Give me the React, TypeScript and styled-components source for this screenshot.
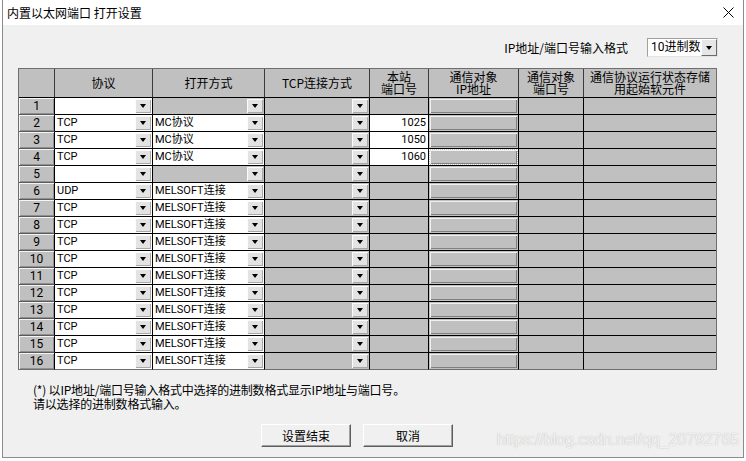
import React from 'react';
import styled, { createGlobalStyle } from 'styled-components';

const GlobalStyle = createGlobalStyle`
  html, body {
    margin: 0;
    padding: 0;
    background: #ffffff;
    overflow: hidden;
  }
  * {
    box-sizing: border-box;
  }
`;

const Window = styled.div`
  position: relative;
  margin-left: 2px;
  width: 742px;
  height: 458px;
  border: 1px solid #8c8c8c;
  border-top: none;
  display: flex;
  flex-direction: column;
  font-family: 'Noto Sans CJK SC', sans-serif;
  color: #000;
`;

const TitleBar = styled.div`
  height: 25px;
  flex: 0 0 auto;
  background: #ffffff;
  display: flex;
  align-items: center;
  justify-content: space-between;
  padding: 0 9px 0 4px;
  font-size: 12px;
`;

const Body = styled.div`
  flex: 1 1 auto;
  background: #f0f0f0;
  display: flex;
  flex-direction: column;
  padding: 13px 26px 0 15px;
`;

const FormatRow = styled.div`
  height: 19px;
  margin-bottom: 11px;
  display: flex;
  align-items: center;
  justify-content: flex-end;
  font-size: 12px;
`;

const FormatLabel = styled.span`
  margin-right: 19px;
`;

const Select = styled.div`
  width: 71px;
  height: 19px;
  margin-right: -1px;
  display: flex;
  align-items: stretch;
  background: #fff;
  border: 1px solid #a0a0a0;
  border-right-color: #e3e3e3;
  border-bottom-color: #e3e3e3;
  font-family: Roboto, 'Noto Sans CJK SC', sans-serif;
  font-size: 12px;
`;

const SelectText = styled.span`
  flex: 1;
  padding-left: 3px;
  line-height: 17px;
`;

const SelectButton = styled.div`
  width: 16px;
  background: #e6e6e6;
  border: 1px solid;
  border-color: #ffffff #6a6a6a #6a6a6a #ffffff;
  display: flex;
  align-items: center;
  justify-content: center;
`;

const Arrow = styled.span`
  width: 0;
  height: 0;
  border-left: 3.5px solid transparent;
  border-right: 3.5px solid transparent;
  border-top: 4px solid #000;
`;

const Grid = styled.div`
  width: 699px;
  display: grid;
  grid-template-columns: 36px 98px 112px 105px 59px 90px 65px 132px;
  grid-template-rows: 29px repeat(16, 17px);
  border: 1px solid #6e6e6e;
  border-bottom: none;
  background: #c0c0c0;
`;

const HeadCell = styled.div<{ $last?: boolean }>`
  background: #c0c0c0;
  border-right: ${({ $last }) => ($last ? 'none' : '1px solid #3c3c3c')};
  border-bottom: 1px solid #000;
  display: flex;
  align-items: center;
  justify-content: center;
  text-align: center;
  font-size: 12px;
  line-height: 12.5px;
  white-space: pre-line;
`;

const RowNo = styled.div<{ $lastRow?: boolean }>`
  background: #c0c0c0;
  border-right: 1px solid #000;
  border-bottom: 1px solid ${({ $lastRow }) => ($lastRow ? '#6e6e6e' : '#5a5a5a')};
  box-shadow: inset 1px 1px #f4f4f4, inset -1px -1px #909090;
  display: flex;
  align-items: center;
  justify-content: center;
  font-family: Roboto, sans-serif;
  font-size: 12px;
`;

const Cell = styled.div<{ $white?: boolean; $last?: boolean; $lastRow?: boolean }>`
  background: ${({ $white }) => ($white ? '#ffffff' : '#c0c0c0')};
  border-right: ${({ $last }) => ($last ? 'none' : '1px solid #000')};
  border-bottom: 1px solid ${({ $lastRow }) => ($lastRow ? '#6e6e6e' : '#000')};
  display: flex;
  align-items: stretch;
  font-family: Roboto, 'Noto Sans CJK SC', sans-serif;
  font-size: 11px;
  line-height: 16px;
  overflow: hidden;
`;

const CellText = styled.span<{ $right?: boolean }>`
  flex: 1;
  padding: 0 2px;
  text-align: ${({ $right }) => ($right ? 'right' : 'left')};
  white-space: nowrap;
`;

const DropButton = styled.div`
  width: 16px;
  margin: 1px 1px 1px 0;
  background: #e3e3e3;
  box-shadow: inset 1px 1px #fbfbfb, inset -1px -1px #a8a8a8;
  display: flex;
  align-items: center;
  justify-content: center;
`;

const IpBox = styled.div<{ $focus?: boolean }>`
  flex: 1;
  margin: 1px;
  background: #c0c0c0;
  box-shadow: inset 1px 1px #f0f0f0, inset -1px -1px #808080;
  outline: ${({ $focus }) => ($focus ? '1px dotted #ffffff' : 'none')};
  outline-offset: 0px;
`;

const Note = styled.div`
  margin-top: 13px;
  padding-left: 15px;
  font-size: 12px;
  line-height: 14px;
  letter-spacing: -0.2px;
`;

const Buttons = styled.div`
  margin-top: 13px;
  padding-left: 243px;
  display: flex;
  gap: 12px;
`;

const PushButton = styled.button`
  width: 90px;
  height: 23px;
  padding: 0;
  background: #f0f0f0;
  border: 1px solid;
  border-color: #ffffff #5e5e5e #5e5e5e #ffffff;
  box-shadow: inset -1px -1px #a0a0a0;
  font-family: 'Noto Sans CJK SC', sans-serif;
  font-size: 12px;
  color: #000;
`;

const Watermark = styled.div`
  position: absolute;
  right: 4px;
  top: 431px;
  font-family: 'Liberation Sans', Arial, sans-serif;
  font-size: 16px;
  letter-spacing: -0.1px;
  color: rgba(250, 250, 250, 0.9);
  text-shadow: 0 0 1px rgba(140, 140, 140, 0.7);
  white-space: nowrap;
  pointer-events: none;
`;

const headers = [
  '',
  '协议',
  '打开方式',
  'TCP连接方式',
  '本站\n端口号',
  '通信对象\nIP地址',
  '通信对象\n端口号',
  '通信协议运行状态存储\n用起始软元件',
];

type Row = { proto: string; open: string | null; port: string | null };

const rows: Row[] = [
  { proto: '', open: null, port: null },
  { proto: 'TCP', open: 'MC协议', port: '1025' },
  { proto: 'TCP', open: 'MC协议', port: '1050' },
  { proto: 'TCP', open: 'MC协议', port: '1060' },
  { proto: '', open: null, port: null },
  { proto: 'UDP', open: 'MELSOFT连接', port: null },
  ...Array.from({ length: 10 }, () => ({ proto: 'TCP', open: 'MELSOFT连接', port: null })),
];

function Combo({ value, white, lastRow }: { value: string; white: boolean; lastRow: boolean }) {
  return (
    <Cell $white={white} $lastRow={lastRow}>
      <CellText>{value}</CellText>
      <DropButton>
        <Arrow />
      </DropButton>
    </Cell>
  );
}

function CloseIcon() {
  return (
    <svg width="11" height="11" viewBox="0 0 11 11">
      <path d="M0.5 0.5 L10.5 10.5 M10.5 0.5 L0.5 10.5" stroke="#000" strokeWidth="1" fill="none" />
    </svg>
  );
}

export default function App() {
  return (
    <>
      <GlobalStyle />
      <Window>
        <TitleBar>
          <span>内置以太网端口 打开设置</span>
          <CloseIcon />
        </TitleBar>
        <Body>
          <FormatRow>
            <FormatLabel>IP地址/端口号输入格式</FormatLabel>
            <Select>
              <SelectText>10进制数</SelectText>
              <SelectButton>
                <Arrow />
              </SelectButton>
            </Select>
          </FormatRow>
          <Grid>
            {headers.map((h, i) => (
              <HeadCell key={i} $last={i === headers.length - 1}>
                {h}
              </HeadCell>
            ))}
            {rows.map((r, i) => {
              const lastRow = i === rows.length - 1;
              return (
                <React.Fragment key={i}>
                  <RowNo $lastRow={lastRow}>{i + 1}</RowNo>
                  <Combo value={r.proto} white lastRow={lastRow} />
                  <Combo value={r.open ?? ''} white={r.open !== null} lastRow={lastRow} />
                  <Combo value="" white={false} lastRow={lastRow} />
                  <Cell $white={r.port !== null} $lastRow={lastRow}>
                    <CellText $right>{r.port}</CellText>
                  </Cell>
                  <Cell $lastRow={lastRow}>
                    <IpBox $focus={i === 3} />
                  </Cell>
                  <Cell $lastRow={lastRow} />
                  <Cell $last $lastRow={lastRow} />
                </React.Fragment>
              );
            })}
          </Grid>
          <Note>
            (*) 以IP地址/端口号输入格式中选择的进制数格式显示IP地址与端口号。
            <br />
            请以选择的进制数格式输入。
          </Note>
          <Buttons>
            <PushButton>设置结束</PushButton>
            <PushButton>取消</PushButton>
          </Buttons>
        </Body>
        <Watermark>https://blog.csdn.net/qq_20792765</Watermark>
      </Window>
    </>
  );
}
